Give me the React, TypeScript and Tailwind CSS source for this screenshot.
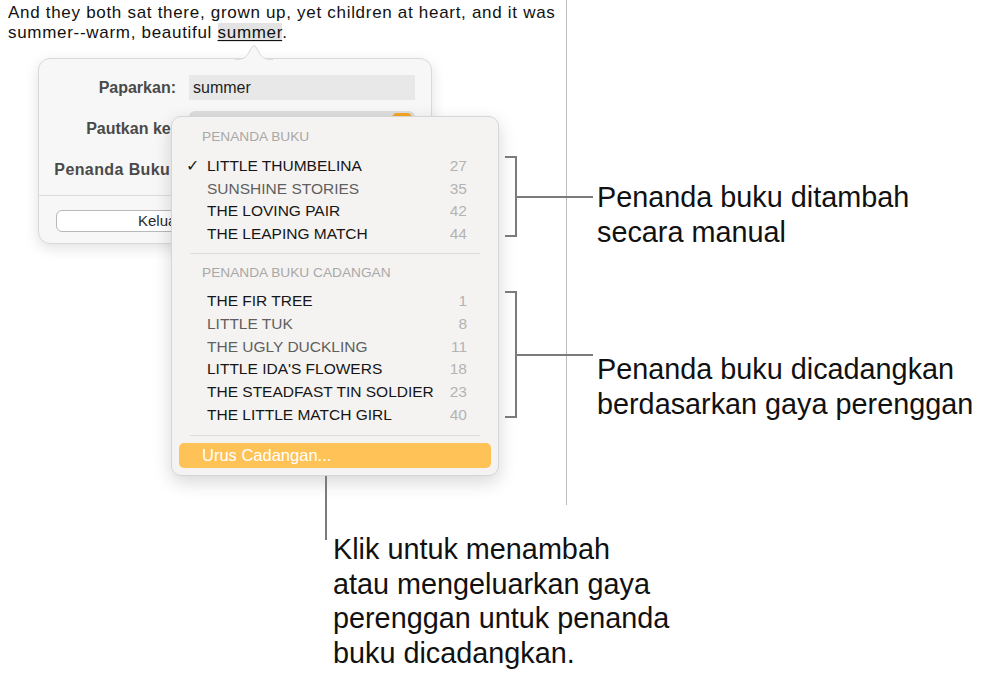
import React from 'react'

type Item = { title: string; page: number; dim?: boolean; checked?: boolean }

const manual: Item[] = [
  { title: 'LITTLE THUMBELINA', page: 27, checked: true },
  { title: 'SUNSHINE STORIES', page: 35, dim: true },
  { title: 'THE LOVING PAIR', page: 42 },
  { title: 'THE LEAPING MATCH', page: 44 },
]

const suggested: Item[] = [
  { title: 'THE FIR TREE', page: 1 },
  { title: 'LITTLE TUK', page: 8, dim: true },
  { title: 'THE UGLY DUCKLING', page: 11, dim: true },
  { title: "LITTLE IDA'S FLOWERS", page: 18 },
  { title: 'THE STEADFAST TIN SOLDIER', page: 23 },
  { title: 'THE LITTLE MATCH GIRL', page: 40 },
]

function MenuRow({ item }: { item: Item }) {
  return (
    <div className="h-[22.75px] flex items-center pl-[14px] pr-[31px] text-[15.5px]">
      <span className="w-[21px] text-[#1a1a1a]">{item.checked ? '✓' : ''}</span>
      <span className={`flex-1 ${item.dim ? 'text-[#5f5f5f]' : 'text-[#161616]'}`}>{item.title}</span>
      <span className="text-[#b3b3b3]">{item.page}</span>
    </div>
  )
}

function Callout({ lines }: { lines: string[] }) {
  return (
    <div className="text-[28.8px] leading-[34.5px] text-[#111]">
      {lines.map((l) => (
        <div key={l}>{l}</div>
      ))}
    </div>
  )
}

export default function App() {
  return (
    <div
      className="relative w-[991px] h-[678px] bg-white overflow-hidden"
      style={{ fontFamily: '"Liberation Sans", Arial, sans-serif' }}
    >
      {/* document page */}
      <div className="w-[567px] h-[505px] border-r border-[#bdbdbd] pl-[8px] pt-[3px] text-[17px] leading-[19.5px] tracking-[0.7px] text-[#111]">
        <p className="whitespace-nowrap">And they both sat there, grown up, yet children at heart, and it was</p>
        <p className="whitespace-nowrap">
          summer--warm, beautiful{' '}
          <span className="bg-[#e3e3e3] underline underline-offset-2">summer</span>.
        </p>
      </div>

      {/* link popover */}
      <div className="absolute left-[38px] top-[58px] w-[394px] h-[186px] rounded-[12px] bg-[#f7f7f7] border border-[#d9d9d9] shadow-[0_4px_14px_rgba(0,0,0,0.12)] flex flex-col">
        <svg className="absolute left-[196px] top-[-15px]" width="38" height="16" viewBox="0 0 38 16">
          <path d="M0 15.5 C8 15.5 10 14 13 10 L17 3 Q19 0 21 3 L25 10 C28 14 30 15.5 38 15.5 Z" fill="#f7f7f7" />
          <path d="M0 15.5 C8 15.5 10 14 13 10 L17 3 Q19 0 21 3 L25 10 C28 14 30 15.5 38 15.5" fill="none" stroke="#d9d9d9" />
        </svg>
        <div className="flex flex-col gap-[16px] pt-[16px] text-[16px] font-bold text-[#4a4a4a]">
          <div className="flex items-center h-[25px]">
            <span className="w-[137px] text-right">Paparkan:</span>
            <div className="ml-[13px] w-[226px] h-[25px] bg-[#e8e8e8] flex items-center px-[4px] font-normal text-[#1e1e1e]">summer</div>
          </div>
          <div className="flex items-center h-[25px]">
            <span className="w-[137px] text-right whitespace-nowrap">Pautkan ke:</span>
            <div className="ml-[13px] w-[226px] h-[36px] shrink-0 rounded-[6px] bg-[#dedede] flex justify-end items-start pr-[3px] pt-[2px]">
              <div className="w-[20px] h-[20px] rounded-[5px] bg-[#f5a623]" />
            </div>
          </div>
          <div className="flex items-center h-[25px]">
            <span className="w-[137px] text-right whitespace-nowrap tracking-[0.4px]">Penanda Buku:</span>
          </div>
        </div>
        <div className="mt-[13px] h-px bg-[#dcdcdc]" />
        <div className="mt-[14px] ml-[17px] w-[359px] h-[22px] rounded-[6px] border border-[#b8b8b8] bg-white flex items-center pl-[81px] text-[15px] text-[#2a2a2a]">
          Keluarkan
        </div>
      </div>

      {/* bookmark menu */}
      <div className="absolute left-[171px] top-[116px] w-[328px] h-[360px] rounded-[10px] bg-[#f5f3f1] border border-[#d6d6d6] shadow-[0_6px_18px_rgba(0,0,0,0.16)] flex flex-col pt-[10px] pb-[7px]">
        <div className="h-[20px] flex items-center pl-[30px] text-[13.7px] text-[#a8a8a8]">PENANDA BUKU</div>
        <div className="mt-[7px]">
          {manual.map((it) => (
            <MenuRow key={it.title} item={it} />
          ))}
        </div>
        <div className="mt-[8px] mx-[18px] h-[1.5px] bg-[#dedcda]" />
        <div className="mt-[9px] h-[20px] flex items-center pl-[30px] text-[13.7px] text-[#a8a8a8]">PENANDA BUKU CADANGAN</div>
        <div className="mt-[6px]">
          {suggested.map((it) => (
            <MenuRow key={it.title} item={it} />
          ))}
        </div>
        <div className="mt-[9px] mx-[18px] h-[1.5px] bg-[#dedcda]" />
        <div className="mt-[7px] mx-[7px] h-[27px] rounded-[5px] bg-[#ffc257] flex items-center pl-[23px] text-[16.5px] text-white">
          Urus Cadangan...
        </div>
      </div>

      {/* callout: manual bookmarks */}
      <div className="absolute left-[505px] top-[156px] flex items-center">
        <div className="w-[12px] h-[81px] border-t-2 border-r-2 border-b-2 border-[#7b7b7b]" />
        <div className="w-[76px] h-[2px] bg-[#7b7b7b]" />
      </div>
      <div className="absolute left-[597px] top-[180px]">
        <Callout lines={['Penanda buku ditambah', 'secara manual']} />
      </div>

      {/* callout: suggested bookmarks */}
      <div className="absolute left-[505px] top-[291px] flex items-center">
        <div className="w-[12px] h-[127px] border-t-2 border-r-2 border-b-2 border-[#7b7b7b]" />
        <div className="w-[76px] h-[2px] bg-[#7b7b7b]" />
      </div>
      <div className="absolute left-[597px] top-[352px]">
        <Callout lines={['Penanda buku dicadangkan', 'berdasarkan gaya perenggan']} />
      </div>

      {/* callout: manage */}
      <div className="absolute left-[325px] top-[476px] w-[2px] h-[64px] bg-[#7b7b7b]" />
      <div className="absolute left-[333px] top-[532px]">
        <Callout
          lines={[
            'Klik untuk menambah',
            'atau mengeluarkan gaya',
            'perenggan untuk penanda',
            'buku dicadangkan.',
          ]}
        />
      </div>
    </div>
  )
}
